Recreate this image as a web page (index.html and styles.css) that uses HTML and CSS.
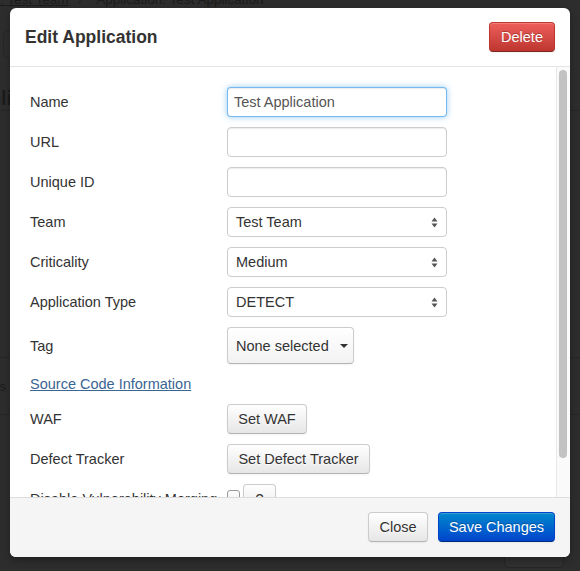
FILE: index.html
```html
<!DOCTYPE html>
<html>
<head>
<meta charset="utf-8">
<title>Edit Application</title>
<link rel="stylesheet" href="styles.css">
</head>
<body>
<div class="page">
  <div class="crumbs"><span class="crumb-link">l: Test Team</span><span class="crumb-sep">/</span><span>Application: Test Application</span></div>
  <div class="page-tab"></div>
  <div class="page-head">Appli</div>
  <div class="page-line first"></div>
  <div class="page-band">
    <div class="page-band-text">Vulns</div>
  </div>
  <div class="page-bottom">
    <div class="filters">Filters</div>
  </div>
</div>

<div class="modal">
  <div class="modal-header">
    <h3 class="modal-title">Edit Application</h3>
    <button class="btn btn-danger">Delete</button>
  </div>
  <div class="modal-body">
    <div class="modal-content">
      <div class="row"><div class="label">Name</div><div class="input focus">Test Application</div></div>
      <div class="row"><div class="label">URL</div><div class="input"></div></div>
      <div class="row"><div class="label">Unique ID</div><div class="input"></div></div>
      <div class="row"><div class="label">Team</div><div class="input select">Test Team<svg class="updown" width="7" height="11" viewBox="0 0 7 11"><path d="M3.5 0.5 L6.5 4.5 L0.5 4.5 Z M0.5 6.5 L6.5 6.5 L3.5 10.5 Z" fill="#555"/></svg></div></div>
      <div class="row"><div class="label">Criticality</div><div class="input select">Medium<svg class="updown" width="7" height="11" viewBox="0 0 7 11"><path d="M3.5 0.5 L6.5 4.5 L0.5 4.5 Z M0.5 6.5 L6.5 6.5 L3.5 10.5 Z" fill="#555"/></svg></div></div>
      <div class="row"><div class="label">Application Type</div><div class="input select">DETECT<svg class="updown" width="7" height="11" viewBox="0 0 7 11"><path d="M3.5 0.5 L6.5 4.5 L0.5 4.5 Z M0.5 6.5 L6.5 6.5 L3.5 10.5 Z" fill="#555"/></svg></div></div>
      <div class="row row-tag"><div class="label">Tag</div><button class="btn btn-default btn-tag">None selected<span class="caret"></span></button></div>
      <div class="row row-link"><a class="link">Source Code Information</a></div>
      <div class="row"><div class="label">WAF</div><button class="btn btn-default btn-waf">Set WAF</button></div>
      <div class="row"><div class="label">Defect Tracker</div><button class="btn btn-default btn-defect">Set Defect Tracker</button></div>
      <div class="row row-disable"><div class="label">Disable Vulnerability Merging</div><span class="checkbox"></span><button class="btn btn-default btn-help">?</button></div>
    </div>
    <div class="scrollbar"><div class="thumb"></div></div>
  </div>
  <div class="modal-footer">
    <button class="btn btn-default btn-close">Close</button>
    <button class="btn btn-primary">Save Changes</button>
  </div>
</div>
</body>
</html>
```

FILE: styles.css
```css
* { box-sizing: border-box; }

html, body {
  margin: 0;
  padding: 0;
}

body {
  width: 580px;
  height: 571px;
  overflow: hidden;
  position: relative;
  background: #2d2d2d;
  font-family: "Liberation Sans", Helvetica, Arial, sans-serif;
  font-size: 14.5px;
  color: #333;
}

/* ---------- backdrop page (dimmed) ---------- */
.page {
  position: absolute;
  inset: 0;
  color: #1b1b1b;
}

.crumbs {
  margin-top: -9px;
  margin-left: -3px;
  font-size: 13.5px;
  line-height: 18px;
  white-space: nowrap;
}

.crumb-link {
  text-decoration: underline;
}

.crumb-sep {
  margin: 0 14px 0 10px;
  color: #222;
}

.page-tab {
  margin-top: 22px;
  margin-left: 3px;
  width: 12px;
  height: 27px;
  border: 1px solid #262626;
  border-radius: 4px;
}

.page-head {
  margin-top: 28px;
  margin-left: -38px;
  font-size: 20px;
  font-weight: bold;
  line-height: 24px;
  white-space: nowrap;
}

.page-line.first {
  margin-top: 0;
  border-top: 1px solid #262626;
}

.page-band {
  margin-top: 246px;
  height: 58px;
  border-top: 1px solid #262626;
  border-bottom: 1px solid #262626;
  display: flex;
  align-items: center;
}

.page-band-text {
  margin-left: -26px;
  font-size: 13px;
}

.page-bottom {
  display: flex;
  justify-content: flex-end;
  margin-top: 123px;
  padding-right: 16px;
}

.filters {
  width: 60px;
  height: 30px;
  border: 1px solid #262626;
  border-radius: 4px;
  background: #303030;
  padding-left: 13px;
  padding-top: 1px;
  font-size: 14px;
  line-height: 16px;
}

/* ---------- modal ---------- */
.modal {
  position: absolute;
  left: 10px;
  top: 8px;
  width: 560px;
  height: 549px;
  background: #fff;
  border-radius: 6px;
  box-shadow: 0 3px 7px rgba(0, 0, 0, 0.3);
  display: flex;
  flex-direction: column;
  overflow: hidden;
}

.modal-header {
  height: 59px;
  flex: none;
  border-bottom: 1px solid #e5e5e5;
  padding: 0 15px;
  display: flex;
  align-items: center;
  justify-content: space-between;
}

.modal-title {
  margin: 0;
  font-size: 17.5px;
  font-weight: bold;
  color: #333;
  line-height: 20px;
}

.modal-body {
  height: 430px;
  flex: none;
  display: flex;
}

.modal-content {
  flex: 1;
  overflow: hidden;
  padding: 20px 0 0 20px;
}

.scrollbar {
  width: 14px;
  flex: none;
  background: #fafafa;
  border-left: 1px solid #e8e8e8;
  padding: 3px 0 0 2px;
}

.thumb {
  width: 8px;
  height: 388px;
  border-radius: 4px;
  background: #c2c2c2;
}

.modal-footer {
  height: 60px;
  flex: none;
  background: #f5f5f5;
  border-top: 1px solid #ddd;
  display: flex;
  justify-content: flex-end;
  align-items: center;
  gap: 10px;
  padding: 0 15px 2px 0;
}

/* ---------- form rows ---------- */
.row {
  display: flex;
  align-items: center;
  height: 30px;
  margin-bottom: 10px;
}

.row-tag {
  height: 37px;
}

.row-link {
  height: 20px;
}

.label {
  width: 197px;
  flex: none;
  white-space: nowrap;
  color: #333;
  line-height: 20px;
}

.input {
  width: 220px;
  height: 30px;
  border: 1px solid #ccc;
  border-radius: 4px;
  background: #fff;
  box-shadow: inset 0 1px 1px rgba(0, 0, 0, 0.075);
  padding: 0 6px;
  display: flex;
  align-items: center;
  color: #555;
  white-space: nowrap;
}

.input.focus {
  border-color: rgba(82, 168, 236, 0.8);
  box-shadow: inset 0 1px 1px rgba(0, 0, 0, 0.075), 0 0 6px rgba(82, 168, 236, 0.6);
}

.input.select {
  justify-content: space-between;
  padding: 0 8px 0 8px;
  box-shadow: none;
  color: #333;
}

.updown {
  display: block;
}

.link {
  color: #3b6593;
  text-decoration: underline;
  line-height: 20px;
}

/* ---------- buttons ---------- */
.btn {
  font-family: inherit;
  font-size: 14.5px;
  line-height: 20px;
  height: 30px;
  border-radius: 4px;
  padding: 0 12px;
  cursor: pointer;
  display: inline-flex;
  align-items: center;
  justify-content: center;
  margin: 0;
  white-space: nowrap;
  flex: none;
}

.btn-default {
  color: #333;
  background: linear-gradient(#ffffff, #e6e6e6);
  border: 1px solid #cccccc;
  border-bottom-color: #b3b3b3;
  box-shadow: inset 0 1px 0 rgba(255, 255, 255, 0.2), 0 1px 2px rgba(0, 0, 0, 0.05);
  text-shadow: 0 1px 1px rgba(255, 255, 255, 0.75);
}

.btn-danger {
  width: 66px;
  padding: 0;
  color: #fff;
  background: linear-gradient(#ee5f5b, #bd362f);
  border: 1px solid #bd362f;
  border-bottom-color: #802420;
  text-shadow: 0 -1px 0 rgba(0, 0, 0, 0.25);
  box-shadow: inset 0 1px 0 rgba(255, 255, 255, 0.2), 0 1px 2px rgba(0, 0, 0, 0.05);
}

.btn-primary {
  width: 117px;
  padding: 0;
  color: #fff;
  background: linear-gradient(#0088cc, #0044cc);
  border: 1px solid #0044cc;
  border-bottom-color: #002a80;
  text-shadow: 0 -1px 0 rgba(0, 0, 0, 0.25);
  box-shadow: inset 0 1px 0 rgba(255, 255, 255, 0.2), 0 1px 2px rgba(0, 0, 0, 0.05);
}

.btn-close {
  width: 60px;
  padding: 0;
}

.btn-tag {
  width: 127px;
  height: 37px;
  justify-content: flex-start;
  padding: 0 0 0 8px;
  background: linear-gradient(#ffffff, #f2f2f2);
}

.caret {
  display: inline-block;
  width: 0;
  height: 0;
  border-left: 4px solid transparent;
  border-right: 4px solid transparent;
  border-top: 4px solid #333;
  margin-left: 11px;
  margin-top: 1px;
}

.btn-waf {
  width: 80px;
  padding: 0;
}

.btn-defect {
  width: 143px;
  padding: 0;
}

.row-disable {
  align-items: flex-start;
}

.row-disable .label {
  margin-top: 5px;
}

.checkbox {
  flex: none;
  width: 13px;
  height: 13px;
  border: 1px solid #999;
  border-radius: 3px;
  background: linear-gradient(#fff, #eee);
  margin-top: 6px;
}

.btn-help {
  width: 33px;
  margin-left: 3px;
  padding: 0;
}
```
